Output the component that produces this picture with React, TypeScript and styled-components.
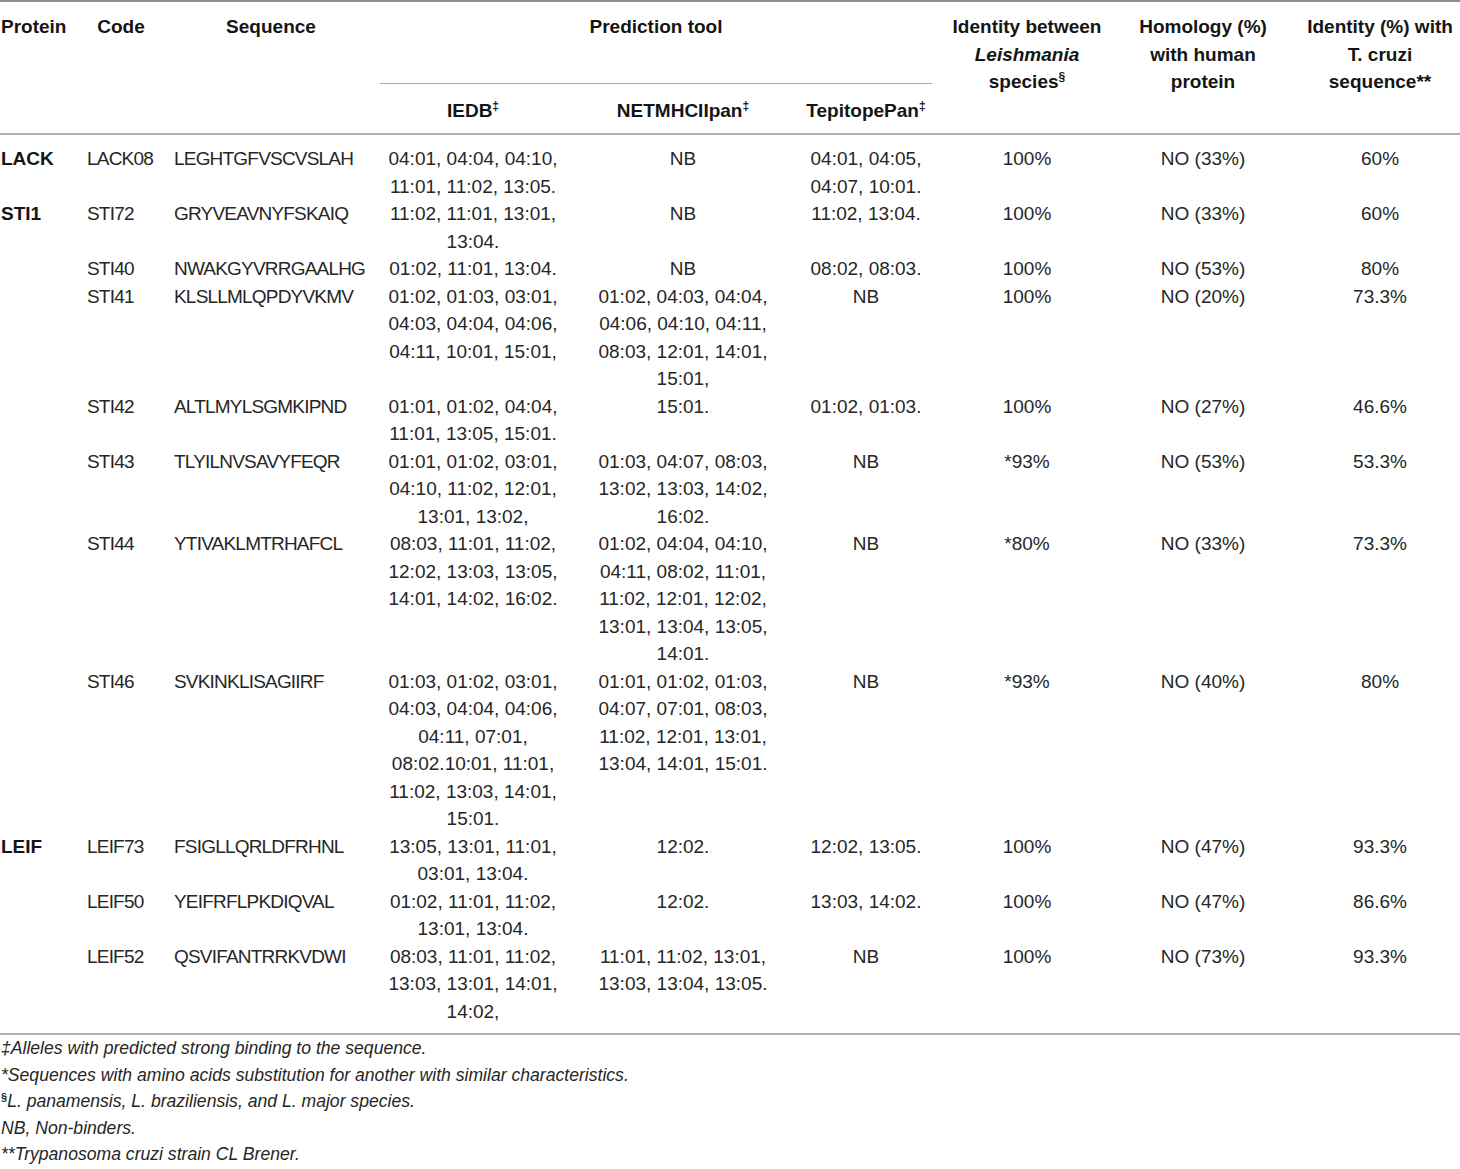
import React from 'react';
import styled, { createGlobalStyle } from 'styled-components';

type Align = 'left' | 'center';

interface Column {
    width: number;
}

interface Epitope {
    protein?: string;
    code: string;
    sequence: string;
    iedb: string[];
    netmhc: string[];
    tepitope: string[];
    leishmania: string;
    homology: string;
    cruzi: string;
}

const GlobalStyle = createGlobalStyle`
    body {
        margin: 0;
        background: #ffffff;
        font-family: "Liberation Sans", Arial, sans-serif;
        color: #222222;
    }
`;

// column widths add up to the full 1460px page
const columns: Column[] = [
    { width: 80 },
    { width: 82 },
    { width: 218 },
    { width: 186 },
    { width: 234 },
    { width: 132 },
    { width: 190 },
    { width: 162 },
    { width: 176 },
];

const rows: Epitope[] = [
    {
        protein: 'LACK',
        code: 'LACK08',
        sequence: 'LEGHTGFVSCVSLAH',
        iedb: ['04:01, 04:04, 04:10,', '11:01, 11:02, 13:05.'],
        netmhc: ['NB'],
        tepitope: ['04:01, 04:05,', '04:07, 10:01.'],
        leishmania: '100%',
        homology: 'NO (33%)',
        cruzi: '60%',
    },
    {
        protein: 'STI1',
        code: 'STI72',
        sequence: 'GRYVEAVNYFSKAIQ',
        iedb: ['11:02, 11:01, 13:01,', '13:04.'],
        netmhc: ['NB'],
        tepitope: ['11:02, 13:04.'],
        leishmania: '100%',
        homology: 'NO (33%)',
        cruzi: '60%',
    },
    {
        code: 'STI40',
        sequence: 'NWAKGYVRRGAALHG',
        iedb: ['01:02, 11:01, 13:04.'],
        netmhc: ['NB'],
        tepitope: ['08:02, 08:03.'],
        leishmania: '100%',
        homology: 'NO (53%)',
        cruzi: '80%',
    },
    {
        code: 'STI41',
        sequence: 'KLSLLMLQPDYVKMV',
        iedb: ['01:02, 01:03, 03:01,', '04:03, 04:04, 04:06,', '04:11, 10:01, 15:01,'],
        netmhc: ['01:02, 04:03, 04:04,', '04:06, 04:10, 04:11,', '08:03, 12:01, 14:01,', '15:01,'],
        tepitope: ['NB'],
        leishmania: '100%',
        homology: 'NO (20%)',
        cruzi: '73.3%',
    },
    {
        code: 'STI42',
        sequence: 'ALTLMYLSGMKIPND',
        iedb: ['01:01, 01:02, 04:04,', '11:01, 13:05, 15:01.'],
        netmhc: ['15:01.'],
        tepitope: ['01:02, 01:03.'],
        leishmania: '100%',
        homology: 'NO (27%)',
        cruzi: '46.6%',
    },
    {
        code: 'STI43',
        sequence: 'TLYILNVSAVYFEQR',
        iedb: ['01:01, 01:02, 03:01,', '04:10, 11:02, 12:01,', '13:01, 13:02,'],
        netmhc: ['01:03, 04:07, 08:03,', '13:02, 13:03, 14:02,', '16:02.'],
        tepitope: ['NB'],
        leishmania: '*93%',
        homology: 'NO (53%)',
        cruzi: '53.3%',
    },
    {
        code: 'STI44',
        sequence: 'YTIVAKLMTRHAFCL',
        iedb: ['08:03, 11:01, 11:02,', '12:02, 13:03, 13:05,', '14:01, 14:02, 16:02.'],
        netmhc: [
            '01:02, 04:04, 04:10,',
            '04:11, 08:02, 11:01,',
            '11:02, 12:01, 12:02,',
            '13:01, 13:04, 13:05,',
            '14:01.',
        ],
        tepitope: ['NB'],
        leishmania: '*80%',
        homology: 'NO (33%)',
        cruzi: '73.3%',
    },
    {
        code: 'STI46',
        sequence: 'SVKINKLISAGIIRF',
        iedb: [
            '01:03, 01:02, 03:01,',
            '04:03, 04:04, 04:06,',
            '04:11, 07:01,',
            '08:02.10:01, 11:01,',
            '11:02, 13:03, 14:01,',
            '15:01.',
        ],
        netmhc: ['01:01, 01:02, 01:03,', '04:07, 07:01, 08:03,', '11:02, 12:01, 13:01,', '13:04, 14:01, 15:01.'],
        tepitope: ['NB'],
        leishmania: '*93%',
        homology: 'NO (40%)',
        cruzi: '80%',
    },
    {
        protein: 'LEIF',
        code: 'LEIF73',
        sequence: 'FSIGLLQRLDFRHNL',
        iedb: ['13:05, 13:01, 11:01,', '03:01, 13:04.'],
        netmhc: ['12:02.'],
        tepitope: ['12:02, 13:05.'],
        leishmania: '100%',
        homology: 'NO (47%)',
        cruzi: '93.3%',
    },
    {
        code: 'LEIF50',
        sequence: 'YEIFRFLPKDIQVAL',
        iedb: ['01:02, 11:01, 11:02,', '13:01, 13:04.'],
        netmhc: ['12:02.'],
        tepitope: ['13:03, 14:02.'],
        leishmania: '100%',
        homology: 'NO (47%)',
        cruzi: '86.6%',
    },
    {
        code: 'LEIF52',
        sequence: 'QSVIFANTRRKVDWI',
        iedb: ['08:03, 11:01, 11:02,', '13:03, 13:01, 14:01,', '14:02,'],
        netmhc: ['11:01, 11:02, 13:01,', '13:03, 13:04, 13:05.'],
        tepitope: ['NB'],
        leishmania: '100%',
        homology: 'NO (73%)',
        cruzi: '93.3%',
    },
];

const Page = styled.div`
    width: 1460px;
`;

const Table = styled.table`
    width: 1460px;
    table-layout: fixed;
    border-collapse: collapse;
    border-top: 2px solid #8e8e8e;
    border-bottom: 2px solid #b0b0b0;
`;

const Head = styled.thead`
    border-bottom: 2px solid #b0b0b0;
`;

const HeadCell = styled.th<{ $inset?: number; $rule?: boolean; $tall?: boolean; $align?: Align }>`
    height: ${p => (p.$tall ? '70px' : '36px')};
    padding: ${p => (p.$tall ? '11px' : '13px')} 0 0 ${p => p.$inset ?? 0}px;
    vertical-align: top;
    text-align: ${p => p.$align ?? 'center'};
    font-size: 19px;
    font-weight: 700;
    line-height: 27.5px;
    color: #151515;
    border-bottom: ${p => (p.$rule ? '1px solid #a8a8a8' : 'none')};
`;

const Body = styled.tbody`
    tr:first-child td {
        padding-top: 10px;
    }

    tr:last-child td {
        padding-bottom: 8px;
    }
`;

const Cell = styled.td<{ $align: Align; $inset: number; $bold?: boolean; $tight?: boolean }>`
    padding: 0 0 0 ${p => p.$inset}px;
    vertical-align: top;
    text-align: ${p => p.$align};
    font-size: 19px;
    font-weight: ${p => (p.$bold ? 700 : 400)};
    line-height: 27.5px;
    letter-spacing: ${p => (p.$tight ? '-0.8px' : '0')};
    white-space: nowrap;
    color: ${p => (p.$bold ? '#151515' : '#262626')};
`;

const Line = styled.div``;

const Sup = styled.sup`
    font-size: 12px;
    line-height: 0;
    vertical-align: 7px;
`;

const Notes = styled.div`
    padding: 0 0 0 1px;
    font-size: 17.6px;
    font-style: italic;
    line-height: 26.5px;
    color: #262626;
`;

const Note = styled.p`
    margin: 0;
`;

const NoteMark = styled.sup`
    font-size: 11px;
    font-weight: 700;
    font-style: normal;
    line-height: 0;
    vertical-align: 6px;
`;

const Lines = ({ items }: { items: string[] }) => (
    <>
        {items.map((item, i) => (
            <Line key={i}>{item}</Line>
        ))}
    </>
);

const App = () => (
    <Page>
        <GlobalStyle />
        <Table>
            <colgroup>
                {columns.map((c, i) => (
                    <col key={i} style={{ width: c.width }} />
                ))}
            </colgroup>
            <Head>
                <tr>
                    <HeadCell $tall rowSpan={2} $align="left" $inset={1}>
                        Protein
                    </HeadCell>
                    <HeadCell $tall rowSpan={2}>
                        Code
                    </HeadCell>
                    <HeadCell $tall rowSpan={2}>
                        Sequence
                    </HeadCell>
                    <HeadCell $tall $rule colSpan={3}>
                        Prediction tool
                    </HeadCell>
                    <HeadCell $tall rowSpan={2}>
                        Identity between
                        <br />
                        <i>Leishmania</i>
                        <br />
                        species<Sup>§</Sup>
                    </HeadCell>
                    <HeadCell $tall rowSpan={2}>
                        Homology (%)
                        <br />
                        with human
                        <br />
                        protein
                    </HeadCell>
                    <HeadCell $tall rowSpan={2} $inset={16}>
                        Identity (%) with
                        <br />
                        T. cruzi
                        <br />
                        sequence**
                    </HeadCell>
                </tr>
                <tr>
                    <HeadCell>
                        IEDB<Sup>‡</Sup>
                    </HeadCell>
                    <HeadCell>
                        NETMHCIIpan<Sup>‡</Sup>
                    </HeadCell>
                    <HeadCell>
                        TepitopePan<Sup>‡</Sup>
                    </HeadCell>
                </tr>
            </Head>
            <Body>
                {rows.map(row => (
                    <tr key={row.code}>
                        <Cell $align="left" $inset={1} $bold>
                            {row.protein}
                        </Cell>
                        <Cell $align="left" $inset={7} $tight>
                            {row.code}
                        </Cell>
                        <Cell $align="left" $inset={12} $tight>
                            {row.sequence}
                        </Cell>
                        <Cell $align="center" $inset={0}>
                            <Lines items={row.iedb} />
                        </Cell>
                        <Cell $align="center" $inset={0}>
                            <Lines items={row.netmhc} />
                        </Cell>
                        <Cell $align="center" $inset={0}>
                            <Lines items={row.tepitope} />
                        </Cell>
                        <Cell $align="center" $inset={0}>
                            {row.leishmania}
                        </Cell>
                        <Cell $align="center" $inset={0}>
                            {row.homology}
                        </Cell>
                        <Cell $align="center" $inset={16}>
                            {row.cruzi}
                        </Cell>
                    </tr>
                ))}
            </Body>
        </Table>
        <Notes>
            <Note>‡Alleles with predicted strong binding to the sequence.</Note>
            <Note>*Sequences with amino acids substitution for another with similar characteristics.</Note>
            <Note>
                <NoteMark>§</NoteMark>L. panamensis, L. braziliensis, and L. major species.
            </Note>
            <Note>NB, Non-binders.</Note>
            <Note>**Trypanosoma cruzi strain CL Brener.</Note>
        </Notes>
    </Page>
);

export default App;
